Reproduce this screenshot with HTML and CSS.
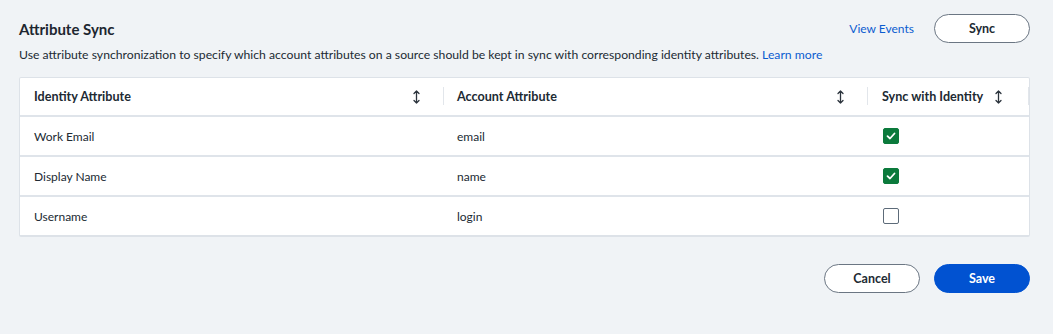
FILE: index.html
```html
<!DOCTYPE html>
<html lang="en">
<head>
    <meta charset="UTF-8">
    <title>Attribute Sync</title>
    <link rel="stylesheet" href="styles.css">
</head>
<body>
    <div class="page">
        <div class="page-head">
            <h1>Attribute Sync</h1>
            <div class="head-actions">
                <a href="#" class="link">View Events</a>
                <button type="button" class="btn btn-outline">Sync</button>
            </div>
        </div>
        <p class="desc">Use attribute synchronization to specify which account attributes on a source should be kept in sync with corresponding identity attributes. <a href="#" class="link">Learn more</a></p>

        <div class="table">
            <div class="row head">
                <div class="cell col-identity">Identity Attribute <span class="sort"></span></div>
                <div class="cell col-account">Account Attribute <span class="sort"></span></div>
                <div class="cell col-sync">Sync with Identity <span class="sort"></span></div>
            </div>
            <div class="row">
                <div class="cell col-identity">Work Email</div>
                <div class="cell col-account">email</div>
                <div class="cell col-sync"><span class="check on"></span></div>
            </div>
            <div class="row">
                <div class="cell col-identity">Display Name</div>
                <div class="cell col-account">name</div>
                <div class="cell col-sync"><span class="check on"></span></div>
            </div>
            <div class="row">
                <div class="cell col-identity">Username</div>
                <div class="cell col-account">login</div>
                <div class="cell col-sync"><span class="check"></span></div>
            </div>
        </div>

        <div class="footer">
            <button type="button" class="btn btn-outline">Cancel</button>
            <button type="button" class="btn btn-primary">Save</button>
        </div>
    </div>

    <template id="sort-icon">
        <svg width="7" height="14" viewBox="0 0 7 14"><path d="M3.5 1v12M1 3.5L3.5 1 6 3.5M1 10.5L3.5 13 6 10.5" fill="none" stroke="#2b333c" stroke-width="1.3" stroke-linecap="round" stroke-linejoin="round"/></svg>
    </template>
    <template id="check-icon">
        <svg width="10" height="8" viewBox="0 0 10 8"><path d="M1.5 4.2L4 6.5 8.5 1.5" fill="none" stroke="#fff" stroke-width="1.8" stroke-linecap="round" stroke-linejoin="round"/></svg>
    </template>
    <script>
        // アイコンを差し込む
        document.querySelectorAll('.sort').forEach(el => {
            el.innerHTML = document.getElementById('sort-icon').innerHTML;
        });
        document.querySelectorAll('.check.on').forEach(el => {
            el.innerHTML = document.getElementById('check-icon').innerHTML;
        });
    </script>
</body>
</html>
```

FILE: styles.css
```css
body {
    margin: 0;
    background: #f0f3f6;
    font-family: "Lato", "Noto Sans", sans-serif;
    color: #212a33;
}
.page {
    padding: 14px 23px 0 19px;
}
.page-head {
    display: flex;
    justify-content: space-between;
    align-items: center;
}
h1 {
    margin: 0;
    font-size: 15px;
    font-weight: 700;
    color: #1d2630;
}
.head-actions {
    display: flex;
    align-items: center;
    gap: 20px;
}
.link {
    color: #0b5cd0;
    text-decoration: none;
}
.head-actions .link {
    font-size: 12px;
}
.desc {
    margin: 4px 0 0 0;
    font-size: 12.2px;
    line-height: 16px;
}
.table {
    margin-top: 14px;
    background: white;
    border: 1px solid #dde2e8;
    border-bottom-width: 2px;
    border-radius: 2px;
}
.row {
    display: flex;
    height: 40px;
    box-sizing: border-box;
    align-items: center;
    border-top: 2px solid #dfe4ea;
    font-size: 12px;
}
.row.head {
    height: 37px;
    border-top: none;
    font-weight: 700;
    font-size: 12.6px;
}
.cell {
    display: flex;
    align-items: center;
    padding-left: 14px;
    box-sizing: border-box;
    height: 100%;
}
.col-identity {
    width: 424px;
}
.col-account {
    width: 424px;
    padding-left: 13px;
}
.col-sync {
    flex: 1;
}
.head .cell {
    justify-content: space-between;
    padding-right: 24px;
    position: relative;
}
.head .col-sync {
    justify-content: flex-start;
    gap: 12px;
}
.head .cell::after {
    content: "";
    position: absolute;
    right: 0;
    top: 9px;
    bottom: 10px;
    width: 1px;
    background: #e2e6eb;
}
.sort {
    display: flex;
}
.check {
    width: 14px;
    height: 14px;
    border: 1px solid #5d6b79;
    border-radius: 2px;
    display: flex;
    align-items: center;
    justify-content: center;
    margin-left: 1px;
}
.check.on {
    background: #0b7a3c;
    border-color: #0b7a3c;
}
.footer {
    display: flex;
    justify-content: flex-end;
    gap: 14px;
    margin-top: 27px;
}
.btn {
    width: 96px;
    height: 29px;
    border-radius: 15px;
    font-family: inherit;
    font-size: 12.5px;
    font-weight: 700;
    cursor: pointer;
}
.btn-outline {
    background: white;
    border: 1px solid #6b7683;
    color: #212a33;
}
.btn-primary {
    background: #0152d1;
    border: 1px solid #0152d1;
    color: white;
}
```
